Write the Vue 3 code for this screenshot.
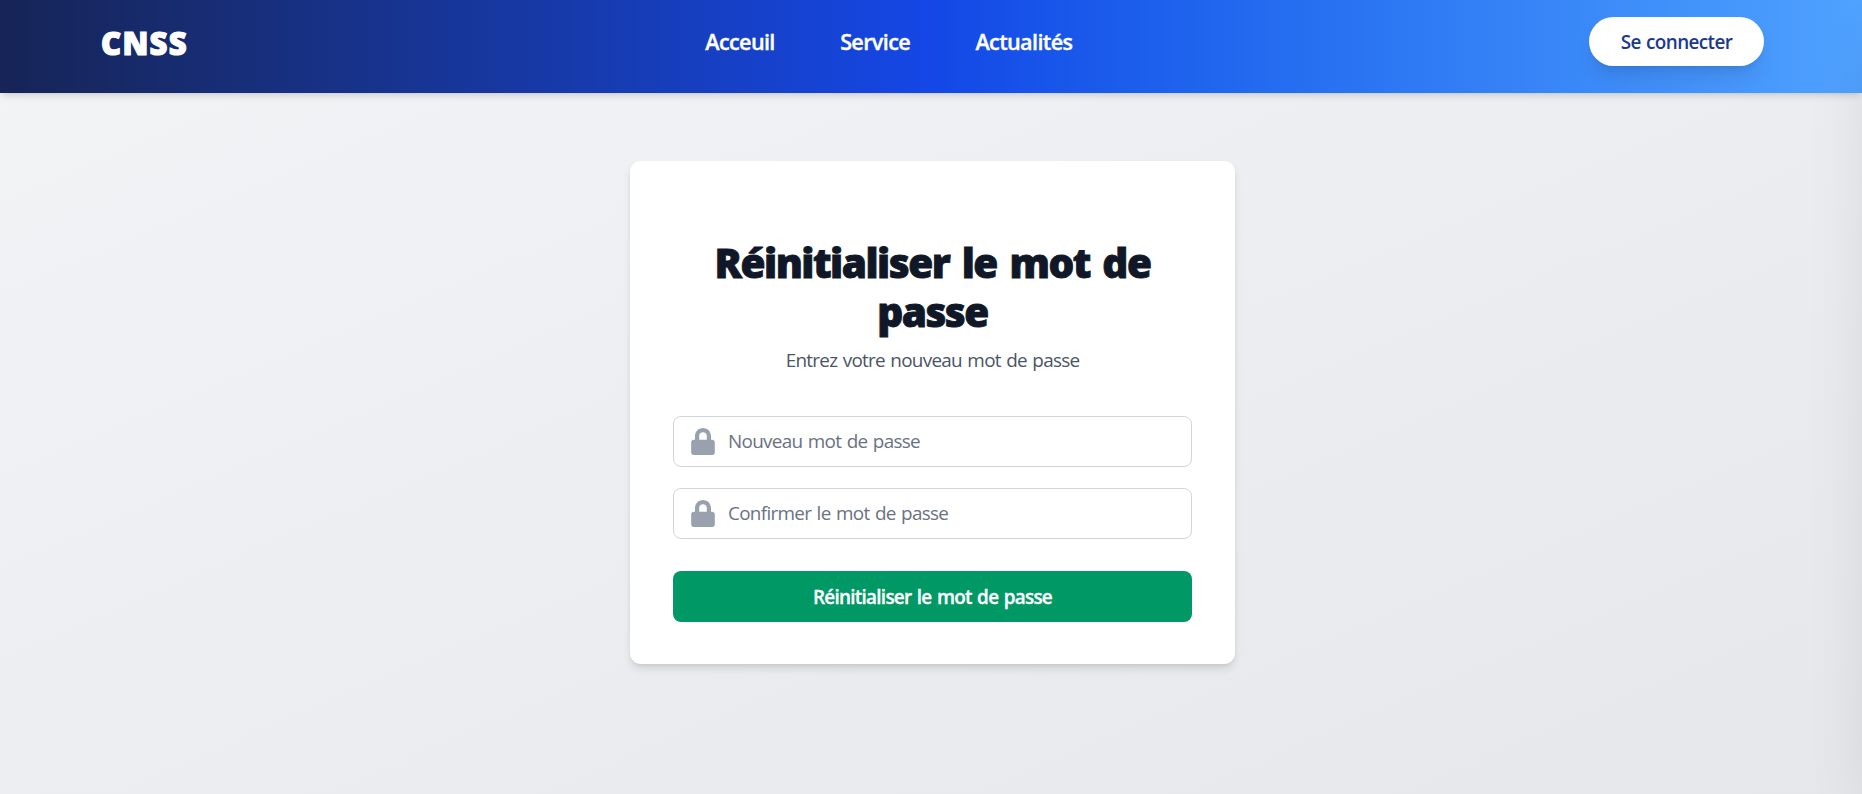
<script setup>
const links = ['Acceuil', 'Service', 'Actualités']
const fields = ['Nouveau mot de passe', 'Confirmer le mot de passe']
</script>

<template>
  <div class="page">
    <header class="header">
      <div class="logo">CNSS</div>
      <nav class="nav"><a v-for="l in links" :key="l">{{ l }}</a></nav>
      <button class="login">Se connecter</button>
    </header>
    <main class="main">
      <form class="card">
        <h2 class="title">Réinitialiser le mot de passe</h2>
        <p class="subtitle">Entrez votre nouveau mot de passe</p>
        <label v-for="f in fields" :key="f" class="field">
          <svg class="lock" viewBox="0 0 448 512"><path d="M400 224h-24v-72C376 68.2 307.8 0 224 0S72 68.2 72 152v72H48c-26.5 0-48 21.5-48 48v192c0 26.5 21.5 48 48 48h352c26.5 0 48-21.5 48-48V272c0-26.5-21.5-48-48-48zm-104 0H152v-72c0-39.7 32.3-72 72-72s72 32.3 72 72v72z" /></svg>
          <input type="password" :placeholder="f" />
        </label>
        <button type="button" class="submit">Réinitialiser le mot de passe</button>
      </form>
    </main>
    <aside class="drawer"></aside>
  </div>
</template>

<style>
body { margin: 0; }
</style>

<style scoped>
* { box-sizing: border-box; }
.page { position: relative; height: 794px; overflow: hidden; display: flex; flex-direction: column; font-family: "Open Sans", "Noto Sans", sans-serif; background: linear-gradient(to bottom right in oklab, #f3f4f6, #e5e7eb); }
.header { position: relative; flex: none; height: 93px; display: grid; grid-template-columns: 604.3px 1fr 175px; padding: 0 98px 0 101px; background: linear-gradient(to right in oklab, #162456, #1447e6, #50a2ff); box-shadow: 0 5.4px 8.1px -1.35px rgba(0,0,0,.1), 0 2.7px 5.4px -2.7px rgba(0,0,0,.1); color: #fff; }
.logo { font-size: 31px; font-weight: 800; line-height: 44px; padding-top: 21px; letter-spacing: 1.3px; -webkit-text-stroke: 1.2px #fff; }
.nav { display: flex; gap: 65.4px; padding-top: 26px; font-size: 21.6px; font-weight: 600; line-height: 32px; letter-spacing: -0.64px; -webkit-text-stroke: 0.35px #fff; }
.login { margin-top: 17px; width: 175px; height: 49px; border: 0; border-radius: 25px; background: #fff; color: #1c398e; font: 550 18.9px/27px "Open Sans", "Noto Sans", sans-serif; letter-spacing: -0.6px; word-spacing: 1px; padding: 1px 0 0; box-shadow: 0 13.5px 20px -4px rgba(0,0,0,.1), 0 5.4px 8.1px -5.4px rgba(0,0,0,.1); }
.main { flex: 1; display: flex; flex-direction: column; align-items: center; padding: 68px 0 0 3px; }
.card { flex: none; width: 605px; height: 503px; padding: 78px 43px 42px; border-radius: 11px; background: #fff; box-shadow: 0 5.4px 8.1px -1.35px rgba(0,0,0,.1), 0 2.7px 5.4px -2.7px rgba(0,0,0,.1); }
.title { margin: 0; text-align: center; font-size: 40.5px; line-height: 48.6px; font-weight: 800; color: #101828; letter-spacing: -1.5px; word-spacing: 3.5px; -webkit-text-stroke: 0.9px #101828; }
.subtitle { margin: 11px 0 42px; text-align: center; font-size: 18.9px; line-height: 27px; color: #4a5565; letter-spacing: -0.72px; word-spacing: 1.2px; }
.field { display: flex; align-items: center; height: 51px; margin-bottom: 21px; padding-left: 16.7px; border: 1px solid #d1d5dc; border-radius: 8px; }
.lock { flex: none; width: 24px; height: 27px; fill: #99a1af; }
input { flex: 1; border: 0; outline: 0; background: none; margin-left: 13.3px; padding: 0 0 1px; font: 18.9px/27px "Open Sans", "Noto Sans", sans-serif; letter-spacing: -0.7px; word-spacing: 1.2px; }
input::placeholder { color: #6a7282; opacity: 1; }
.submit { width: 100%; height: 51px; margin-top: 11px; padding-top: 3px; border: 0; border-radius: 8px; background: #009966; color: #fff; font: 600 18.9px/27px "Open Sans", "Noto Sans", sans-serif; letter-spacing: -0.73px; word-spacing: 1.2px; -webkit-text-stroke: 0.3px #fff; }
.drawer { position: absolute; top: 0; left: 100%; width: 346px; height: 100%; box-shadow: 0 34px 67.5px -16px rgba(0,0,0,.12); }
</style>
